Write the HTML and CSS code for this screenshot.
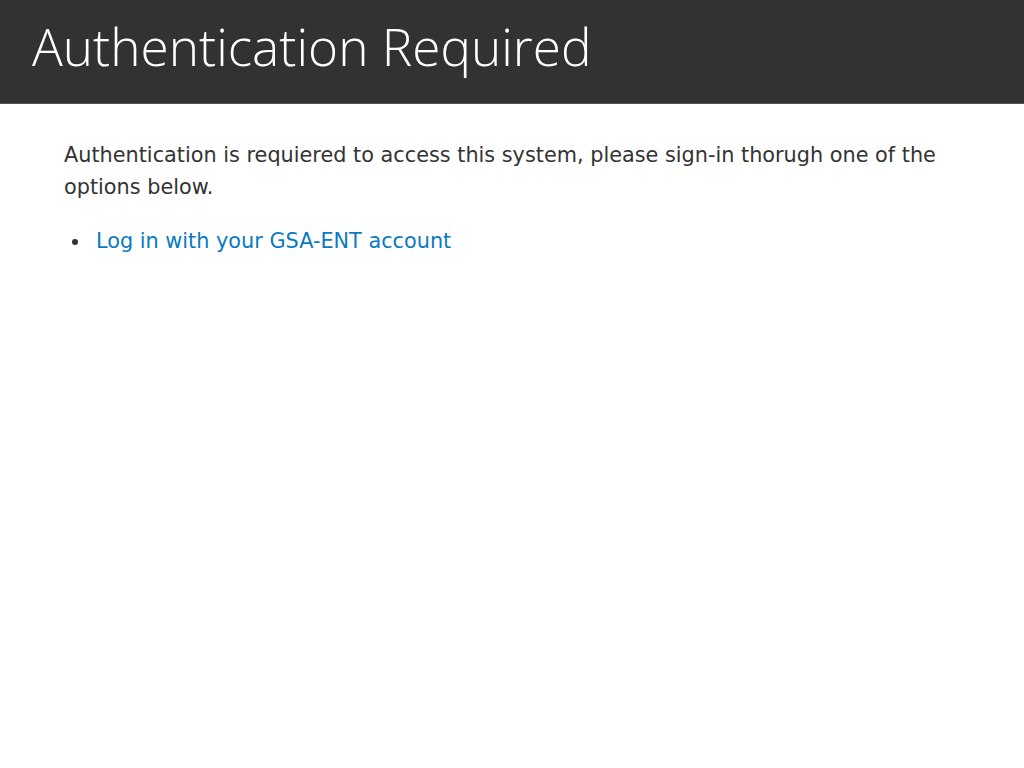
FILE: index.html
```html
<!DOCTYPE html>
<html>
<head>
<meta charset="utf-8">
<link rel="stylesheet" href="styles.css">
</head>
<body>
<header class="topbar">
  <h1 class="title">Authentication Required</h1>
</header>
<main class="content">
  <p class="intro">Authentication is requiered to access this system, please sign-in thorugh one of the options below.</p>
  <ul class="options">
    <li class="option"><a class="login-link" href="#">Log in with your GSA-ENT account</a></li>
  </ul>
</main>
</body>
</html>
```

FILE: styles.css
```css
html, body {
  margin: 0;
  padding: 0;
  background: #fff;
}
body {
  font-family: "DejaVu Sans", Verdana, sans-serif;
  color: #333;
}
.topbar {
  background: #323232;
  height: 103px;
  border-bottom: 1px solid #555;
  display: flex;
  align-items: center;
  padding: 0 32px;
}
.title {
  margin: 0;
  font-family: "Open Sans", sans-serif;
  font-weight: 300;
  font-size: 51.3px;
  color: #fff;
  line-height: 1;
  padding-bottom: 10px;
}
.content {
  padding: 0 64px;
  max-width: 896px;
}
.intro {
  margin: 35px 0 0;
  font-size: 20.8px;
  line-height: 32px;
}
.options {
  margin: 22px 0 0;
  padding-left: 0;
  list-style: none;
  font-size: 20.8px;
  line-height: 32px;
}
.option {
  display: flex;
  align-items: center;
}
.option::before {
  content: "";
  width: 6px;
  height: 6px;
  border-radius: 50%;
  background: #333;
  margin: 2px 18px 0 8px;
  flex: none;
}
.login-link {
  color: #0a7ac3;
  text-decoration: none;
}
```
